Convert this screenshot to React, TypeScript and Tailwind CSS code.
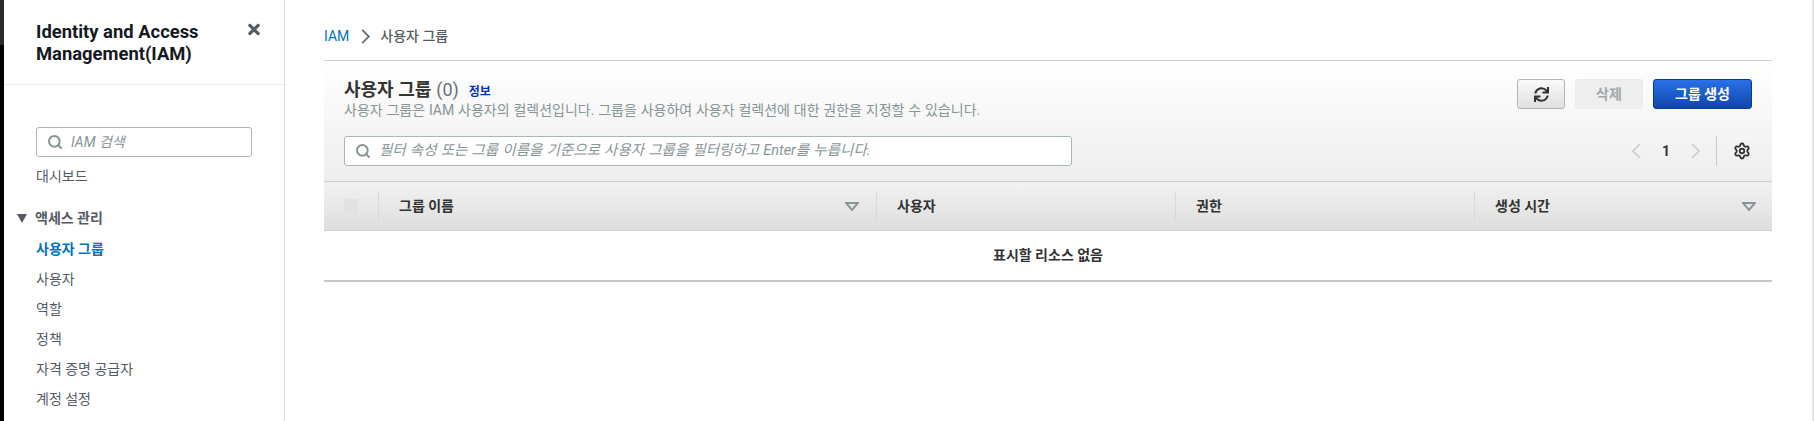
import { FaSync, FaTimes } from 'react-icons/fa';
import { Search, Settings } from 'lucide-react';

const font = "font-['Roboto','Noto_Sans_CJK_KR',sans-serif]";

const navItems = ['사용자', '역할', '정책', '자격 증명 공급자', '계정 설정'];

function SortIcon() {
  return (
    <svg width="14" height="9" viewBox="0 0 14 9" className="shrink-0">
      <path d="M1 1h12L7 8z" fill="none" stroke="#879596" strokeWidth="2" />
    </svg>
  );
}

function Chevron({ dir, className, weight = 1.6 }: { dir: 'left' | 'right'; className: string; weight?: number }) {
  return (
    <svg viewBox="0 0 10 16" fill="none" stroke="currentColor" strokeWidth={weight} className={className}>
      <path d={dir === 'left' ? 'M9 1 2 8l7 7' : 'M1 1l7 7-7 7'} />
    </svg>
  );
}

function HeaderCell({ label, sort, className }: { label: string; sort?: boolean; className: string }) {
  return (
    <div className={`flex h-[30px] items-center justify-between border-l border-[#d5dbdb] pl-5 ${className}`}>
      <span className="text-[14px] font-bold text-[#333]">{label}</span>
      {sort && <SortIcon />}
    </div>
  );
}

export default function App() {
  return (
    <div className={`flex h-[421px] w-[1814px] overflow-hidden bg-white ${font}`}>
      {/* window edge */}
      <div className="flex w-[4px] shrink-0 flex-col">
        <div className="h-[45px] bg-[#2a2a2a]" />
        <div className="flex-1 bg-black" />
      </div>

      {/* Sidebar */}
      <aside className="w-[281px] shrink-0 border-r border-[#d5dbdb]">
        <div className="flex h-[85px] items-start justify-between border-b border-[#eaeded] pl-[32px] pr-[24px] pt-[21px]">
          <h1 className="text-[18.4px] font-bold leading-[22px] text-[#16191f]">
            Identity and Access
            <br />
            Management(IAM)
          </h1>
          <FaTimes className="h-[17px] w-[12px] text-[#545b64]" />
        </div>

        <div className="pl-[32px] pr-[32px] pt-[42px]">
          <div className="flex h-[30px] w-[216px] items-center rounded-[3px] border border-[#aab7b8] pl-[10px]">
            <Search className="h-[16px] w-[16px] text-[#879596]" strokeWidth={3} />
            <span className="ml-[8px] text-[14px] italic text-[#879596]">IAM 검색</span>
          </div>
          <div className="mt-[9px] text-[14px] leading-[20px] text-[#545b64]">대시보드</div>
        </div>

        <div className="mt-[22px] flex items-center pl-[12px]">
          <svg width="12" height="9" viewBox="0 0 12 9">
            <path d="M1 0h10L6 9z" fill="#545b64" />
          </svg>
          <span className="ml-[7px] text-[14px] font-bold leading-[20px] text-[#545b64]">액세스 관리</span>
        </div>
        <div className="pl-[32px]">
          <div className="mt-[11px] text-[14px] font-bold leading-[20px] text-[#0073bb]">사용자 그룹</div>
          {navItems.map((item) => (
            <div key={item} className="mt-[10px] text-[14px] leading-[20px] text-[#545b64]">
              {item}
            </div>
          ))}
        </div>
      </aside>

      {/* Main */}
      <main className="flex-1 pl-[39px] pt-[26px]">
        <div className="flex h-[20px] items-center text-[14px] text-[#545b64]">
          <span className="text-[#0073bb]">IAM</span>
          <Chevron dir="right" weight={2} className="ml-[12px] mr-[9px] h-[15px] w-[10px] text-[#687078]" />
          <span className="font-medium">사용자 그룹</span>
        </div>

        <section className="mt-[14px] w-[1448px]">
          <div className="h-[121px] border-t border-[#cfcfcf] bg-gradient-to-b from-white to-[#eeeeee] px-[20px] pt-[18px]">
            <div className="flex justify-between">
              <div>
                <div className="flex items-baseline">
                  <span className="text-[18px] font-bold leading-[22px] text-[#333]">사용자 그룹</span>
                  <span className="ml-[5px] text-[18px] leading-[22px] text-[#687078]">(0)</span>
                  <span className="ml-[10px] text-[12px] font-bold text-[#0033bb]">정보</span>
                </div>
                <p className="text-[14px] leading-[18px] text-[#879596] [word-spacing:0.35px]">
                  사용자 그룹은 IAM 사용자의 컬렉션입니다. 그룹을 사용하여 사용자 컬렉션에 대한 권한을 지정할 수 있습니다.
                </p>
              </div>
              <div className="flex items-start gap-[10px]">
                <button className="flex h-[30px] w-[48px] items-center justify-center rounded-[3px] border border-[#aab7b8] bg-gradient-to-b from-[#fafafa] to-[#e0e0e0]">
                  <FaSync className="h-[15px] w-[15px] text-[#333]" />
                </button>
                <button className="h-[30px] w-[68px] rounded-[3px] border border-[#eaeded] bg-[#eeeeee] text-[14px] font-bold text-[#a0a8a8]">
                  삭제
                </button>
                <button className="h-[30px] w-[99px] rounded-[3px] border border-[#0a3a8c] bg-gradient-to-b from-[#2a70e8] to-[#0f47ad] text-[14px] font-bold text-white">
                  그룹 생성
                </button>
              </div>
            </div>

            <div className="mt-[17px] flex items-center justify-between">
              <div className="flex h-[30px] w-[728px] items-center rounded-[3px] border border-[#aab7b8] bg-white pl-[10px]">
                <Search className="h-[16px] w-[16px] text-[#879596]" strokeWidth={3} />
                <span className="ml-[8px] text-[14.5px] italic text-[#879596] [word-spacing:0.6px]">
                  필터 속성 또는 그룹 이름을 기준으로 사용자 그룹을 필터링하고 Enter를 누릅니다.
                </span>
              </div>
              <div className="flex items-center">
                <Chevron dir="left" className="h-[16px] w-[10px] text-[#c8cdcd]" />
                <span className="mx-[20px] w-[10px] text-center text-[14px] font-bold text-[#333]">1</span>
                <Chevron dir="right" className="h-[16px] w-[10px] text-[#c8cdcd]" />
                <div className="ml-[15px] h-[30px] border-l border-[#c8c8c8]" />
                <Settings className="ml-[16px] mr-[1px] h-[18px] w-[18px] text-[#333]" strokeWidth={2.4} />
              </div>
            </div>
          </div>

          {/* Table header */}
          <div className="flex h-[50px] items-center border-y border-[#cfcfcf] bg-gradient-to-b from-[#f2f2f2] to-[#dedede]">
            <div className="flex w-[54px] shrink-0 justify-center">
              <div className="h-[14px] w-[14px] rounded-[1px] bg-[#e2e2e2]" />
            </div>
            <HeaderCell label="그룹 이름" sort className="w-[498px] pr-[17px]" />
            <HeaderCell label="사용자" className="w-[299px]" />
            <HeaderCell label="권한" className="w-[299px]" />
            <HeaderCell label="생성 시간" sort className="w-[298px] pr-[16px]" />
          </div>

          <div className="flex h-[51px] items-center justify-center border-b-2 border-[#c8c8c8] text-[14px] font-bold text-[#333]">
            표시할 리소스 없음
          </div>
        </section>
      </main>

      {/* scrollbar edge */}
      <div className="w-[2px] shrink-0 bg-[#e4e4e4]" />
    </div>
  );
}
